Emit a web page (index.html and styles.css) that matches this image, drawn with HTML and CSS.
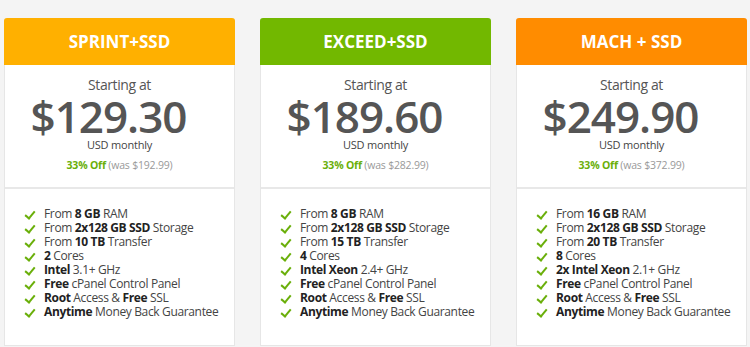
FILE: index.html
```html
<!DOCTYPE html>
<html>
<head>
<meta charset="utf-8">
<link rel="stylesheet" href="styles.css">
</head>
<body>
<div class="plans">
  <div class="card">
    <div class="head sprint">SPRINT+SSD</div>
    <div class="price">
      <div class="start">Starting at</div>
      <div class="amount">$129.30</div>
      <div class="per">USD monthly</div>
      <div class="off"><b>33% Off</b> (was $192.99)</div>
    </div>
    <ul class="feats">
      <li>From <b>8 GB</b> RAM</li>
      <li>From <b>2x128 GB SSD</b> Storage</li>
      <li>From <b>10 TB</b> Transfer</li>
      <li><b>2</b> Cores</li>
      <li><b>Intel</b> 3.1+ GHz</li>
      <li><b>Free</b> cPanel Control Panel</li>
      <li><b>Root</b> Access &amp; <b>Free</b> SSL</li>
      <li><b>Anytime</b> Money Back Guarantee</li>
    </ul>
  </div>
  <div class="card">
    <div class="head exceed">EXCEED+SSD</div>
    <div class="price">
      <div class="start">Starting at</div>
      <div class="amount">$189.60</div>
      <div class="per">USD monthly</div>
      <div class="off"><b>33% Off</b> (was $282.99)</div>
    </div>
    <ul class="feats">
      <li>From <b>8 GB</b> RAM</li>
      <li>From <b>2x128 GB SSD</b> Storage</li>
      <li>From <b>15 TB</b> Transfer</li>
      <li><b>4</b> Cores</li>
      <li><b>Intel Xeon</b> 2.4+ GHz</li>
      <li><b>Free</b> cPanel Control Panel</li>
      <li><b>Root</b> Access &amp; <b>Free</b> SSL</li>
      <li><b>Anytime</b> Money Back Guarantee</li>
    </ul>
  </div>
  <div class="card">
    <div class="head mach">MACH + SSD</div>
    <div class="price">
      <div class="start">Starting at</div>
      <div class="amount">$249.90</div>
      <div class="per">USD monthly</div>
      <div class="off"><b>33% Off</b> (was $372.99)</div>
    </div>
    <ul class="feats">
      <li>From <b>16 GB</b> RAM</li>
      <li>From <b>2x128 GB SSD</b> Storage</li>
      <li>From <b>20 TB</b> Transfer</li>
      <li><b>8</b> Cores</li>
      <li><b>2x Intel Xeon</b> 2.1+ GHz</li>
      <li><b>Free</b> cPanel Control Panel</li>
      <li><b>Root</b> Access &amp; <b>Free</b> SSL</li>
      <li><b>Anytime</b> Money Back Guarantee</li>
    </ul>
  </div>
</div>
</body>
</html>
```

FILE: styles.css
```css
html, body {
  margin: 0;
  padding: 0;
  background: #f4f4f4;
  font-family: "Open Sans", "Liberation Sans", sans-serif;
  color: #333;
}
.plans {
  display: flex;
  gap: 25px;
  padding: 18px 0 0 4px;
}
.card {
  width: 231px;
  height: 328px;
  box-sizing: border-box;
  background: #fff;
  border: 1px solid #e6e6e6;
  border-top: none;
  border-radius: 3px 3px 0 0;
  display: flex;
  flex-direction: column;
}
.head {
  height: 47px;
  margin: 0 -1px;
  border-radius: 3px 3px 0 0;
  color: #fff;
  font-weight: 700;
  font-size: 17px;
  display: flex;
  align-items: center;
  justify-content: center;
}
.sprint { background: #ffb000; }
.exceed { background: #72b800; }
.mach { background: #ff8c00; }
.price {
  text-align: center;
  height: 122px;
  border-bottom: 2px solid #e8e8e8;
  color: #555;
}
.start {
  font-size: 14px;
  letter-spacing: -0.4px;
  margin-top: 10px;
  line-height: 20px;
}
.amount {
  font-size: 44px;
  line-height: 42px;
  font-weight: 600;
  color: #555;
  letter-spacing: -1px;
  padding-right: 22px;
}
.per {
  font-size: 11px;
  letter-spacing: -0.2px;
  line-height: 16px;
  color: #444;
}
.off {
  font-size: 10.5px;
  letter-spacing: -0.2px;
  color: #999;
  margin-top: 5px;
}
.off b { color: #6aaf0a; }
.feats {
  list-style: none;
  margin: 0;
  padding: 18px 0 0 19px;
}
.feats li {
  font-size: 12px;
  letter-spacing: -0.35px;
  line-height: 14px;
  color: #444;
  padding-left: 20px;
  position: relative;
  white-space: nowrap;
}
.feats li b { color: #222; }
.feats li::before {
  content: "";
  position: absolute;
  left: 3px;
  top: 2px;
  width: 4px;
  height: 8px;
  border: solid #6aaf0a;
  border-width: 0 2.5px 2.5px 0;
  transform: rotate(40deg);
}
```
